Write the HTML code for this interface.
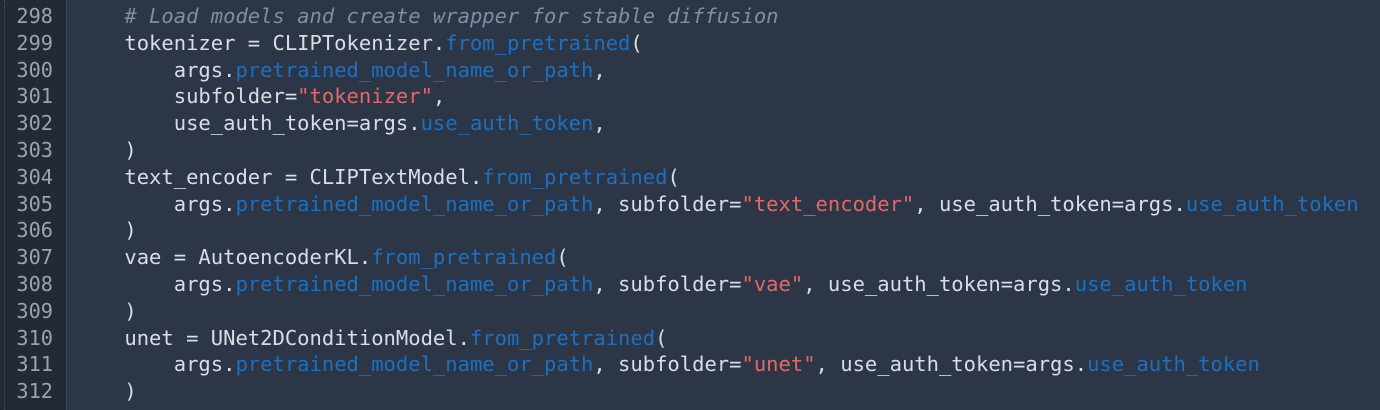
<!DOCTYPE html>
<html><head><style>
html,body{margin:0;padding:0;width:1380px;height:410px;overflow:hidden;background:#2c3646;}
.g{position:absolute;left:0;top:0;width:66px;height:410px;background:#222a35;border-right:1px solid #3b4655;}
.g2{position:absolute;left:4px;top:0;width:1px;height:410px;border-left:1px dotted #4a5563;}
pre{margin:0;font-family:"DejaVu Sans Mono","Liberation Mono",monospace;font-size:20.5px;line-height:26.8px;position:absolute;top:3px;}
.n{left:0;width:53px;text-align:right;color:#9aa4ae;font-size:20.25px;}
.c{left:75px;color:#d9dee4;}
.b{color:#1e6fbf}.s{color:#e36868}.k{color:#7d8fa3;font-style:italic}
</style></head><body>
<div class="g"></div><div class="g2"></div>
<pre class="n">298
299
300
301
302
303
304
305
306
307
308
309
310
311
312</pre>
<pre class="c">    <span class="k"># Load models and create wrapper for stable diffusion</span>
    tokenizer = CLIPTokenizer.<span class="b">from_pretrained</span>(
        args.<span class="b">pretrained_model_name_or_path</span>,
        subfolder=<span class="s">"tokenizer"</span>,
        use_auth_token=args.<span class="b">use_auth_token</span>,
    )
    text_encoder = CLIPTextModel.<span class="b">from_pretrained</span>(
        args.<span class="b">pretrained_model_name_or_path</span>, subfolder=<span class="s">"text_encoder"</span>, use_auth_token=args.<span class="b">use_auth_token</span>
    )
    vae = AutoencoderKL.<span class="b">from_pretrained</span>(
        args.<span class="b">pretrained_model_name_or_path</span>, subfolder=<span class="s">"vae"</span>, use_auth_token=args.<span class="b">use_auth_token</span>
    )
    unet = UNet2DConditionModel.<span class="b">from_pretrained</span>(
        args.<span class="b">pretrained_model_name_or_path</span>, subfolder=<span class="s">"unet"</span>, use_auth_token=args.<span class="b">use_auth_token</span>
    )</pre>
</body></html>
